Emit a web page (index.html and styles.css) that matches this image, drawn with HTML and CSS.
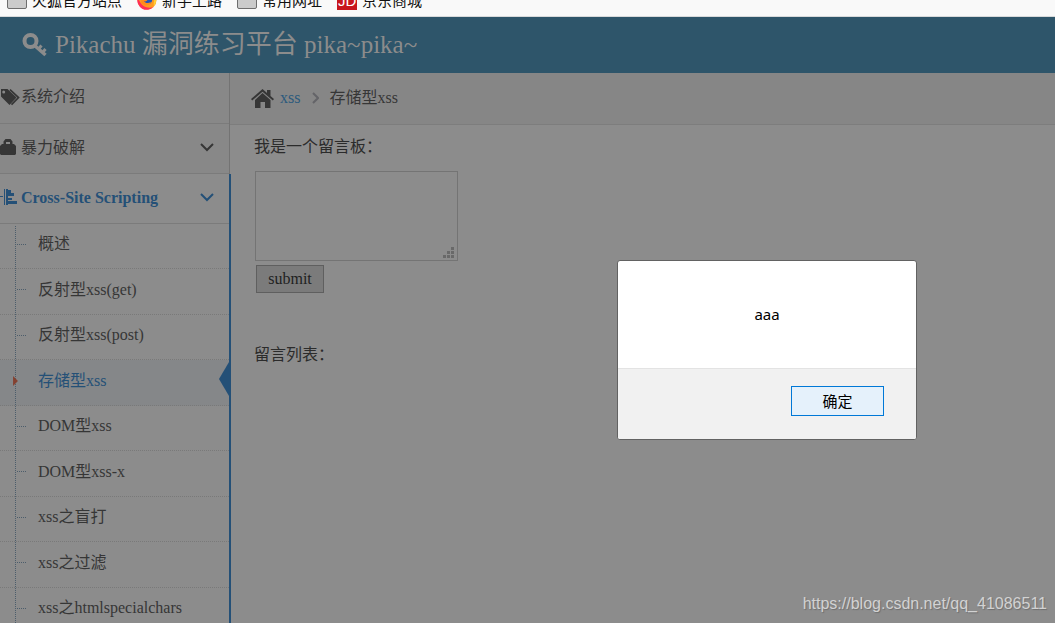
FILE: index.html
```html
<!DOCTYPE html>
<html lang="zh-CN">
<head>
<meta charset="utf-8">
<meta name="viewport" content="width=device-width, initial-scale=1">
<title>Pikachu 漏洞练习平台</title>
<link rel="stylesheet" href="styles.css">
</head>
<body>
<nav class="bookmarks" aria-label="书签">
  <a class="bookmark" href="#"><span class="folder"></span>火狐官方站点</a>
  <a class="bookmark" href="#"><svg class="fox" viewBox="0 0 20 20" aria-hidden="true"><circle cx="10" cy="10" r="9.5" fill="#ff9a1f"/><path d="M.6 8a9.5 9.5 0 0 0 16 9c-3 1-7 1-10-1S2 10 .6 8z" fill="#ff2f55"/><path d="M17 4a9 9 0 0 1 0 12c-1-2 1-7 0-12z" fill="#ffcf35"/><circle cx="10.500" cy="9.500" r="4.800" fill="#2454b8"/><path d="M5 8c2 0 3 2 6 1-1 2-2 3-4 2 1 2 4 3 7 1-1 4-8 5-10 0z" fill="#ff8a1c"/></svg>新手上路</a>
  <a class="bookmark" href="#"><span class="folder"></span>常用网址</a>
  <a class="bookmark" href="#"><span class="jd">JD</span>京东商城</a>
</nav>
<header class="navbar">
  <a class="brand" href="#">
    <svg class="key" viewBox="0 0 26 24" aria-hidden="true"><g fill="none" stroke="currentColor"><circle cx="8.500" cy="8" r="6" stroke-width="4"/><path d="M12 12l11.500 10" stroke-width="3.500"/><path d="M20.500 19.500l3-3.500M16.500 16l3-3.500" stroke-width="3"/></g></svg>
    <span>Pikachu <span class="brand-cjk">漏洞练习平台</span> pika~pika~</span>
  </a>
</header>
<div class="layout">
  <aside class="sidebar">
    <ul class="menu">
      <li class="menu-item"><a class="menu-link" href="#">
        <svg class="menu-icon tags" viewBox="0 0 20 17" aria-hidden="true"><path fill-rule="evenodd" d="M1 0h6.500L16.500 8.500 9.500 16 1 7.500zM3.700 1.500a1.500 1.500 0 1 0 0 3 1.500 1.500 0 0 0 0-3z"/><path d="M10 .7l8.500 7.800-7 7.200" fill="none" stroke="currentColor" stroke-width="1.700"/></svg><span>系统介绍</span></a></li>
      <li class="menu-item"><a class="menu-link" href="#">
        <svg class="menu-icon" viewBox="0 0 17 17" aria-hidden="true"><path fill-rule="evenodd" d="M3.500 5V2.500L5.500 0h5l2 2.500V5H14l2 2v8l-1 1H1l-1-1V7l2-2zM6 5h4V3H6z"/></svg><span>暴力破解</span>
        <svg class="chevron" viewBox="0 0 14 9" aria-hidden="true"><path d="M1 1l6 6 6-6"/></svg></a></li>
      <li class="menu-item open"><a class="menu-link" href="#">
        <svg class="menu-icon" viewBox="0 0 17 17" aria-hidden="true"><path d="M0 7h3v1H0zM4 0h1v16H4zM7 1h4v3H7zM7 4h7v3H7zM7 9h5v2H7zM7 12h10v3H7zM6 0h2v16H6z"/></svg><span>Cross-Site Scripting</span>
        <svg class="chevron" viewBox="0 0 14 9" aria-hidden="true"><path d="M1 1l6 6 6-6"/></svg></a>
        <ul class="submenu">
          <li><a href="#">概述</a></li>
          <li><a href="#">反射型xss(get)</a></li>
          <li><a href="#">反射型xss(post)</a></li>
          <li class="active"><a href="#">存储型xss</a></li>
          <li><a href="#">DOM型xss</a></li>
          <li><a href="#">DOM型xss-x</a></li>
          <li><a href="#">xss之盲打</a></li>
          <li><a href="#">xss之过滤</a></li>
          <li><a href="#">xss之htmlspecialchars</a></li>
        </ul>
      </li>
    </ul>
  </aside>
  <main class="content">
    <nav class="breadcrumbs" aria-label="面包屑">
      <svg class="home" viewBox="0 0 23 19" aria-hidden="true"><path d="M11.500 0L16 4V1h3.500v6l3.500 3-1.200 1.500L11.500 2.700 1.200 11.500 0 10z"/><path d="M11.500 4L19.500 11v8H14v-6H9.500v6H4v-8z"/></svg>
      <a class="crumb" href="#">xss</a>
      <svg class="crumb-sep" viewBox="0 0 7 12" aria-hidden="true"><path d="M1 1l5 5-5 5"/></svg>
      <span>存储型xss</span>
    </nav>
    <form class="board">
      <label class="caption" for="message">我是一个留言板：</label>
      <div class="field">
        <textarea class="message" id="message"></textarea>
        <svg class="grip" viewBox="0 0 11 11" aria-hidden="true"><path d="M8 0h3v3H8zM4 4h3v3H4zM8 4h3v3H8zM0 8h3v3H0zM4 8h3v3H4zM8 8h3v3H8z"/></svg>
      </div>
      <button class="submit" type="button">submit</button>
      <p class="caption list-title">留言列表：</p>
    </form>
  </main>
</div>
<div class="dialog" role="alertdialog" aria-describedby="alert-text">
  <p class="dialog-text" id="alert-text">aaa</p>
  <div class="dialog-actions"><button class="ok" type="button">确定</button></div>
</div>
<div class="watermark">https://blog.csdn.net/qq_41086511</div>
</body>
</html>
```
FILE: styles.css
```css
* { box-sizing: border-box; }

body {
  margin: 0;
  height: 100vh;
  overflow: hidden;
  position: relative;
  display: flex;
  flex-direction: column;
  background: #8c8c8c;
  color: #2b2b2b;
  font: 16px/24px "Liberation Serif", "Noto Sans CJK SC", serif;
}

a { color: inherit; text-decoration: none; }
ul { list-style: none; margin: 0; padding: 0; }
p { margin: 0; }
svg { flex: none; }

.bookmarks {
  flex: none;
  height: 17px;
  padding: 0 7px 6px;
  overflow: hidden;
  display: flex;
  align-items: flex-end;
  gap: 15px;
  background: #f9f9f9;
  border-bottom: 1px solid #d8dadb;
  color: #111;
  font: 15px/20px "Noto Sans CJK SC", sans-serif;
}
.bookmark { display: flex; align-items: center; gap: 5px; }
.folder {
  width: 20px;
  height: 18px;
  border: 1px solid #6e6e6e;
  border-radius: 2px;
  background: #cbcbcb;
}
.fox { width: 20px; height: 20px; }
.jd {
  width: 20px;
  height: 20px;
  background: #c8161d;
  color: #fff;
  text-align: center;
  font: 15px/22px "Liberation Sans", sans-serif;
}

.navbar {
  flex: none;
  height: 56px;
  padding: 0 22px;
  display: flex;
  align-items: center;
  background: #2e556a;
  color: #8c8c8c;
}
.brand {
  display: flex;
  align-items: center;
  gap: 7px;
  font-size: 25px;
  line-height: 40px;
}
.brand-cjk { font-size: 26px; }
.key { width: 26px; height: 24px; }

.layout { flex: 1; min-height: 0; display: flex; }
.sidebar {
  flex: none;
  width: 230px;
  background: #888;
  border-right: 1px solid #737373;
  color: #363636;
}
.menu-link {
  height: 50px;
  display: flex;
  align-items: center;
  gap: 4px;
  padding: 0 15px 2px 0;
}
.menu-item { border-bottom: 1px solid #7b7b7b; }
.menu-item:nth-child(2) .menu-link { height: 49px; }
.menu-icon { width: 17px; height: 17px; fill: currentColor; }
.menu-icon.tags { width: 20px; margin-right: -3px; }
.chevron {
  width: 14px;
  height: 9px;
  margin-left: auto;
  fill: none;
  stroke: currentColor;
  stroke-width: 2;
}
.open { margin-right: -2px; border-right: 2px solid #245077; background: #8c8c8c; }
.open > .menu-link {
  color: #245077;
  font-weight: bold;
  border-bottom: 1px solid #7b7b7b;
}

.submenu { position: relative; }
.submenu::before {
  content: "";
  position: absolute;
  z-index: 1;
  top: 2px;
  bottom: 0;
  left: 15px;
  border-left: 1px dotted #4c5d6b;
}
.submenu li {
  position: relative;
  height: 45px;
  border-bottom: 1px dotted #797979;
}
.submenu li:nth-child(even) { height: 46px; }
.submenu a {
  display: flex;
  align-items: center;
  height: 100%;
  padding: 0 0 4px 38px;
}
.submenu li::before {
  content: "";
  position: absolute;
  top: 20px;
  left: 17px;
  width: 9px;
  border-top: 1px dotted #4c5d6b;
}
.submenu .active { background: #858789; color: #245077; }
.submenu .active::before {
  z-index: 2;
  top: 12px;
  left: 12px;
  width: 7px;
  height: 18px;
  border: 0;
  background: linear-gradient(#844130, #844130) no-repeat;
  clip-path: polygon(15% 22%, 85% 50%, 15% 78%);
}
.submenu .active::after {
  content: "";
  position: absolute;
  right: 0;
  top: 2px;
  width: 10px;
  height: 34px;
  background: #245077;
  clip-path: polygon(100% 0, 100% 100%, 0 50%);
}

.content { flex: 1; min-width: 0; }
.breadcrumbs {
  height: 52px;
  padding: 0 21px 1px;
  display: flex;
  align-items: center;
  background: #868686;
  border-bottom: 1px solid #7d7d7d;
  color: #363636;
}
.home { width: 23px; height: 19px; fill: currentColor; }
.crumb { margin: 0 12px 0 6px; color: #2b5a7d; }
.crumb-sep {
  width: 7px;
  height: 12px;
  margin-right: 10px;
  fill: none;
  stroke: #646468;
  stroke-width: 2;
}

.board {
  display: flex;
  flex-direction: column;
  align-items: flex-start;
  padding: 10px 24px;
}
.caption { display: block; }
.field { position: relative; margin: 12px 0 0 1px; }
.message {
  display: block;
  width: 203px;
  height: 90px;
  padding: 4px;
  resize: none;
  border: 1px solid #747474;
  background: #8c8c8c;
  color: inherit;
  font: inherit;
}
.grip {
  position: absolute;
  right: 4px;
  bottom: 3px;
  width: 11px;
  height: 11px;
  fill: #696969;
}
.submit {
  width: 68px;
  height: 28px;
  margin: 4px 0 0 2px;
  padding: 0;
  border: 1px solid #5f5f5f;
  background: #7b7b7b;
  color: #1f1f1f;
  font: inherit;
}
.list-title { margin-top: 50px; }

.dialog {
  position: absolute;
  left: 617px;
  top: 260px;
  width: 300px;
  border: 1px solid #626262;
  border-radius: 3px;
  overflow: hidden;
  background: #fff;
  color: #000;
  font: 15px/20px "Noto Sans", "Noto Sans CJK SC", sans-serif;
}
.dialog-text { padding: 43px 20px 44px; text-align: center; }
.dialog-actions {
  display: flex;
  justify-content: flex-end;
  padding: 17px 32px 23px;
  border-top: 1px solid #e3e3e3;
  background: #f1f1f1;
}
.ok {
  width: 93px;
  height: 30px;
  padding: 0;
  border: 1px solid #0078d7;
  background: #e5f1fb;
  color: #000;
  font: inherit;
}

.watermark {
  position: absolute;
  right: 8px;
  bottom: 9px;
  color: #d2d2d2;
  text-shadow: 1px 1px 1px #6f6f6f;
  font: 16px/20px "Liberation Sans", Arial, sans-serif;
}
```
